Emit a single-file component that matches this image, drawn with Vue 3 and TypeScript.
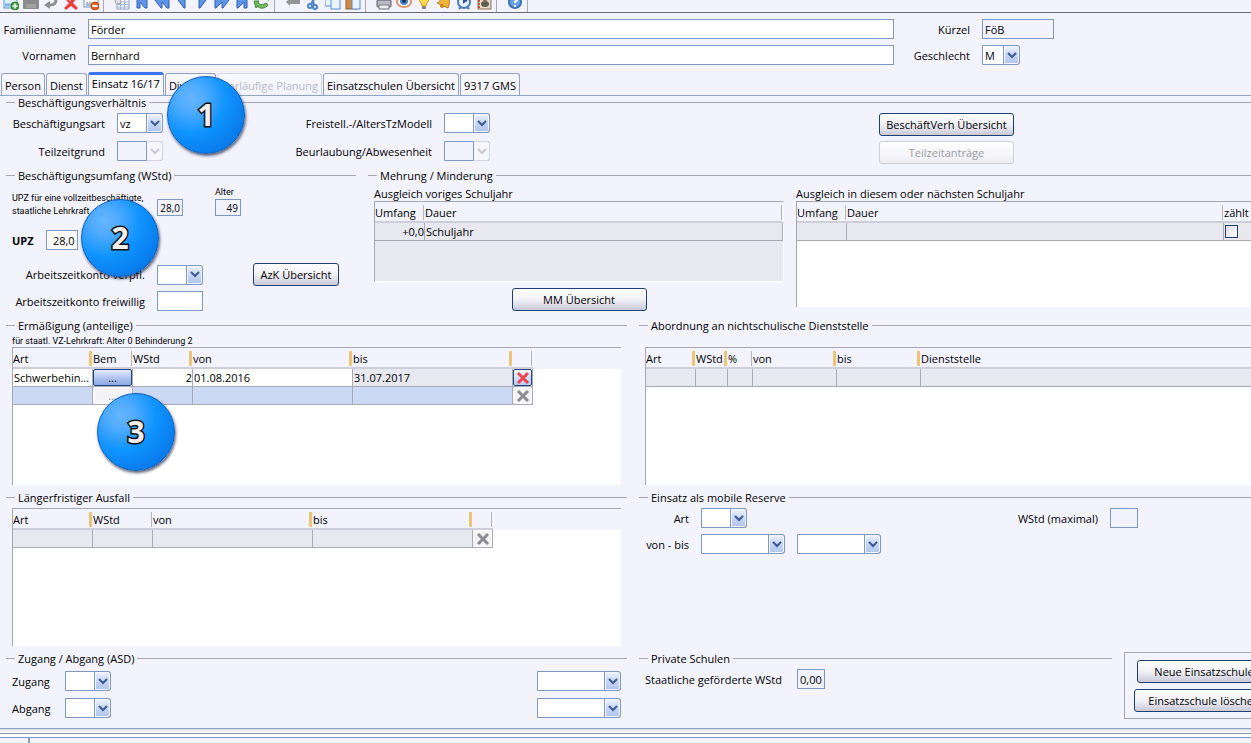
<script setup lang="ts">
import { ref } from 'vue'

type Mark = 'grip' | 'line' | 'none'
interface Column {
  label: string
  width?: number
  mark: Mark
}

const toolGroups: string[][] = [
  ['new', 'save', 'undo', 'delete', 'form'],
  ['grid', 'first', 'rewind', 'prev', 'next', 'forward', 'last', 'refresh'],
  ['back', 'cut', 'copy', 'paste'],
  ['print', 'view', 'hint', 'bell', 'clock', 'contacts'],
  ['help'],
]

const tabs = [
  { label: 'Person' },
  { label: 'Dienst' },
  { label: 'Einsatz 16/17' },
  { label: 'Diverses' },
  { label: 'Vorläufige Planung', disabled: true },
  { label: 'Einsatzschulen Übersicht' },
  { label: '9317 GMS' },
]
const activeTab = ref('Einsatz 16/17')

const familienname = ref('Förder')
const vornamen = ref('Bernhard')
const kuerzel = ref('FöB')
const upz = ref('28,0')
const azkFreiwillig = ref('')

const previousColumns: Column[] = [
  { label: 'Umfang', width: 50, mark: 'line' },
  { label: 'Dauer', mark: 'line' },
]
const currentColumns: Column[] = [
  { label: 'Umfang', width: 50, mark: 'line' },
  { label: 'Dauer', mark: 'line' },
  { label: 'zählt', width: 27, mark: 'none' },
]
const reductionColumns: Column[] = [
  { label: 'Art', width: 80, mark: 'grip' },
  { label: 'Bem', width: 40, mark: 'line' },
  { label: 'WStd', width: 60, mark: 'grip' },
  { label: 'von', width: 160, mark: 'grip' },
  { label: 'bis', width: 160, mark: 'grip' },
  { label: '', width: 20, mark: 'line' },
]
const secondmentColumns: Column[] = [
  { label: 'Art', width: 50, mark: 'grip' },
  { label: 'WStd', width: 32, mark: 'grip' },
  { label: '%', width: 25, mark: 'line' },
  { label: 'von', width: 84, mark: 'grip' },
  { label: 'bis', width: 84, mark: 'grip' },
  { label: 'Dienststelle', mark: 'none' },
]
const absenceColumns: Column[] = [
  { label: 'Art', width: 80, mark: 'grip' },
  { label: 'WStd', width: 60, mark: 'line' },
  { label: 'von', width: 160, mark: 'grip' },
  { label: 'bis', width: 160, mark: 'grip' },
  { label: '', width: 20, mark: 'line' },
]

const colWidth = (c: Column) => (c.width ? { width: c.width + 'px' } : {})
</script>

<template>
  <div class="page">
    <div class="toolbar" role="toolbar" aria-label="Werkzeuge">
      <div v-for="(group, g) in toolGroups" :key="g" class="tool-group">
        <button v-for="name in group" :key="name" type="button" class="tool" :aria-label="name">
          <svg viewBox="0 0 16 16" width="16" height="16" aria-hidden="true">
            <g v-if="name === 'new'">
              <rect x="1" y="1" width="13" height="13" fill="#d8ecfb" stroke="#5a93cf" />
              <path d="M2 11h11" stroke="#7db5e4" stroke-width="3" />
              <circle cx="12" cy="12" r="4" fill="#4fa546" stroke="#2f7a2c" />
              <path d="M12 9.500v5M9.500 12h5" stroke="#fff" stroke-width="1.500" />
            </g>
            <g v-else-if="name === 'save'">
              <rect x="0" y="0" width="16" height="15" rx="1" fill="#8c8c8c" />
              <rect x="3" y="10" width="10" height="4" fill="#a2a2a2" />
            </g>
            <g v-else-if="name === 'undo'">
              <path d="M9 2c5 0 6 9-2 9H5" fill="none" stroke="#8f8f8f" stroke-width="3" />
              <path d="M7 7v8L1 11z" fill="#8f8f8f" />
            </g>
            <path v-else-if="name === 'delete'" d="M2 2l5 5 5-5 2 2-4 5 5 5-2 2-5-4-5 4-2-2 5-5-5-5z" fill="#ee3e3e" />
            <g v-else-if="name === 'form'">
              <rect x="1" y="1" width="14" height="12" fill="#fff" stroke="#6b8fc2" />
              <path d="M3 9h2M6 9h2M3 11h5" stroke="#51719f" />
              <circle cx="12" cy="12" r="4" fill="#e9662b" stroke="#bd4413" />
              <path d="M9.500 12h5" stroke="#fff" stroke-width="2" />
            </g>
            <g v-else-if="name === 'grid'">
              <rect x="3" y="1" width="12" height="14" fill="#fff" stroke="#8aa4c8" />
              <path d="M3 8h12M3 10.500h12M3 13h12M6.500 6v9M10.500 6v9" stroke="#9db4d3" />
              <circle cx="4" cy="7" r="3" fill="#dfe2ea" stroke="#9a9faa" />
            </g>
            <path v-else-if="name === 'first'" d="M3 0h3v6l5-6h2v14h-2L6 8v6H3z" fill="#5f94e6" stroke="#2c5fb6" />
            <path v-else-if="name === 'rewind'" d="M1 6l6-6v6l6-6h2v14h-2L8 8v6H7z" fill="#5f94e6" stroke="#2c5fb6" />
            <path v-else-if="name === 'prev'" d="M4 6l7-7v15h-1z" fill="#5f94e6" stroke="#2c5fb6" />
            <path v-else-if="name === 'next'" d="M12 6L5-1v15h1z" fill="#5f94e6" stroke="#2c5fb6" />
            <path v-else-if="name === 'forward'" d="M15 6L9 0v6L3 0H1v14h1l6-6v6h1z" fill="#5f94e6" stroke="#2c5fb6" />
            <path v-else-if="name === 'last'" d="M13 0h-3v6L5 0H3v14h1l6-6v6h3z" fill="#5f94e6" stroke="#2c5fb6" />
            <g v-else-if="name === 'refresh'">
              <path d="M0 7h5l-1 2c2 2 5 2 8 0l2 2c-3 4-8 4-11 1l-1 2z" fill="#75bb62" stroke="#3d8b36" />
              <path d="M9 4l6 3V2z" fill="#75bb62" />
            </g>
            <path v-else-if="name === 'back'" d="M1 8l4-4v2h10v4H5v2z" fill="#949494" />
            <g v-else-if="name === 'cut'" fill="none" stroke="#4b87c9" stroke-width="2">
              <circle cx="5" cy="12" r="2" /><circle cx="10" cy="13" r="2" />
              <path d="M6 10l5-8M9 11L7 3" />
            </g>
            <g v-else-if="name === 'copy'">
              <rect x="0" y="0" width="10" height="12" fill="#eaf4ff" stroke="#5792d8" />
              <rect x="6" y="4" width="9" height="11" fill="#eaf4ff" stroke="#5792d8" />
            </g>
            <g v-else-if="name === 'paste'">
              <rect x="1" y="0" width="11" height="15" fill="#ce8b45" stroke="#96602d" />
              <rect x="7" y="3" width="8" height="12" fill="#eaf4ff" stroke="#5792d8" />
            </g>
            <g v-else-if="name === 'print'">
              <rect x="1" y="6" width="14" height="7" rx="1" fill="#b9bbc0" stroke="#54565c" />
              <rect x="3" y="11" width="10" height="4" fill="#eee" stroke="#77797f" />
            </g>
            <g v-else-if="name === 'view'">
              <ellipse cx="8" cy="8" rx="7" ry="5" fill="#fff" stroke="#dd946b" stroke-width="2" />
              <circle cx="8" cy="7" r="4" fill="#4a83d1" /><circle cx="8" cy="7" r="2" fill="#123666" />
            </g>
            <g v-else-if="name === 'hint'">
              <path d="M3 4c0-5 10-5 10 0 0 4-3 5-3 8H6c0-3-3-4-3-8z" fill="#ffd84d" stroke="#cf9a1a" />
              <rect x="6" y="12" width="4" height="3" fill="#8a8a8a" />
            </g>
            <g v-else-if="name === 'bell'">
              <path d="M1 9c5-2 4-8 8-8s6 5 3 13z" fill="#efb43a" stroke="#b37712" />
              <circle cx="6" cy="12" r="2" fill="#c98716" />
            </g>
            <g v-else-if="name === 'clock'">
              <circle cx="8" cy="8" r="6" fill="#e9f3fd" stroke="#4a7dbd" stroke-width="2" />
              <path d="M8 3v5l3-2" fill="none" stroke="#2c4f86" stroke-width="2" />
              <path d="M3 15l2-2M13 15l-2-2" stroke="#4a7dbd" stroke-width="2" />
            </g>
            <g v-else-if="name === 'contacts'">
              <rect x="2" y="0" width="13" height="15" fill="#e8dccb" stroke="#8f6f55" />
              <path d="M3 0v15" stroke="#c44f38" stroke-width="2" stroke-dasharray="2 1" />
              <ellipse cx="9" cy="10" rx="4" ry="3" fill="#5a5f50" />
              <circle cx="9" cy="6" r="2" fill="#8a6b52" />
            </g>
            <g v-else>
              <circle cx="8" cy="8" r="6" fill="#6ba2e2" stroke="#3b70b6" stroke-width="2" />
              <path d="M6 6c0-3 5-3 4 0-1 1-2 1-2 3M8 11v2" fill="none" stroke="#fff" stroke-width="2" />
            </g>
          </svg>
        </button>
      </div>
    </div>

    <div class="head">
      <label class="right" for="familienname">Familienname</label>
      <input id="familienname" v-model="familienname" class="box" type="text" />
      <label class="right" for="kuerzel">Kürzel</label>
      <input id="kuerzel" v-model="kuerzel" class="box locked" type="text" readonly />
      <span></span>
      <label class="right" for="vornamen">Vornamen</label>
      <input id="vornamen" v-model="vornamen" class="box" type="text" />
      <label class="right" for="geschlecht">Geschlecht</label>
      <span class="combo tiny">
        <select id="geschlecht"><option>M</option><option>W</option></select>
        <span class="arrow"><svg viewBox="0 0 10 7" width="10" height="7"><path d="M1 1l4 4 4-4" /></svg></span>
      </span>
    </div>

    <div class="tabs" role="tablist">
      <button
        v-for="tab in tabs"
        :key="tab.label"
        type="button"
        role="tab"
        class="tab"
        :class="{ active: tab.label === activeTab }"
        :aria-selected="tab.label === activeTab"
        :disabled="tab.disabled"
        @click="activeTab = tab.label"
      >{{ tab.label }}</button>
    </div>

    <main class="body">
      <fieldset class="employment">
        <legend>Beschäftigungsverhältnis</legend>
        <div class="employment-grid">
          <label class="right" for="art">Beschäftigungsart</label>
          <span class="combo">
            <select id="art"><option>vz</option><option>tz</option></select>
            <span class="arrow"><svg viewBox="0 0 10 7" width="10" height="7"><path d="M1 1l4 4 4-4" /></svg></span>
          </span>
          <label class="right" for="modell">Freistell.-/AltersTzModell</label>
          <span class="combo">
            <select id="modell"><option></option></select>
            <span class="arrow"><svg viewBox="0 0 10 7" width="10" height="7"><path d="M1 1l4 4 4-4" /></svg></span>
          </span>
          <span></span>
          <button type="button" class="btn">BeschäftVerh Übersicht</button>
          <span></span>
          <label class="right" for="grund">Teilzeitgrund</label>
          <span class="combo off">
            <select id="grund" disabled><option></option></select>
            <span class="arrow"><svg viewBox="0 0 10 7" width="10" height="7"><path d="M1 1l4 4 4-4" /></svg></span>
          </span>
          <label class="right" for="abwesenheit">Beurlaubung/Abwesenheit</label>
          <span class="combo off">
            <select id="abwesenheit" disabled><option></option></select>
            <span class="arrow"><svg viewBox="0 0 10 7" width="10" height="7"><path d="M1 1l4 4 4-4" /></svg></span>
          </span>
          <span></span>
          <button type="button" class="btn" disabled>Teilzeitanträge</button>
        </div>
      </fieldset>

      <div class="row scope-row">
        <fieldset>
          <legend>Beschäftigungsumfang (WStd)</legend>
          <div class="scope-top">
            <label class="small scope-note" for="upz-voll">UPZ für eine vollzeitbeschäftigte,<br />staatliche Lehrkraft</label>
            <input id="upz-voll" class="box locked mini" type="text" value="28,0" readonly />
            <div class="age">
              <label class="small" for="alter">Alter</label>
              <input id="alter" class="box locked mini" type="text" value="49" readonly />
            </div>
          </div>
          <div class="upz">
            <label for="upz">UPZ</label>
            <input id="upz" v-model="upz" class="box num" type="text" />
          </div>
          <div class="azk">
            <label class="right" for="azk-v">Arbeitszeitkonto verpfl.</label>
            <span class="combo">
              <select id="azk-v"><option></option></select>
              <span class="arrow"><svg viewBox="0 0 10 7" width="10" height="7"><path d="M1 1l4 4 4-4" /></svg></span>
            </span>
            <button type="button" class="btn azk-btn">AzK Übersicht</button>
          </div>
          <div class="azk second">
            <label class="right" for="azk-f">Arbeitszeitkonto freiwillig</label>
            <input id="azk-f" v-model="azkFreiwillig" class="box azk-input" type="text" />
          </div>
        </fieldset>

        <fieldset>
          <legend>Mehrung / Minderung</legend>
          <div class="balance">
            <div class="balance-col">
              <div class="caption">Ausgleich voriges Schuljahr</div>
              <div class="sheet short">
                <table>
                  <colgroup><col v-for="(c, i) in previousColumns" :key="i" :style="colWidth(c)" /></colgroup>
                  <thead><tr><th v-for="(c, i) in previousColumns" :key="i" scope="col"><div class="th">{{ c.label }}<i :class="c.mark"></i></div></th></tr></thead>
                  <tbody><tr class="gray"><td class="num">+0,0</td><td>Schuljahr</td></tr></tbody>
                </table>
              </div>
              <button type="button" class="btn mm">MM Übersicht</button>
            </div>
            <div class="balance-col">
              <div class="caption">Ausgleich in diesem oder nächsten Schuljahr</div>
              <div class="sheet medium">
                <table>
                  <colgroup><col v-for="(c, i) in currentColumns" :key="i" :style="colWidth(c)" /></colgroup>
                  <thead><tr><th v-for="(c, i) in currentColumns" :key="i" scope="col"><div class="th">{{ c.label }}<i :class="c.mark"></i></div></th></tr></thead>
                  <tbody><tr class="gray"><td></td><td></td><td class="open"><input type="checkbox" class="check" aria-label="zählt" /></td></tr></tbody>
                </table>
              </div>
            </div>
          </div>
        </fieldset>
      </div>

      <div class="row half reduction-row">
        <fieldset>
          <legend>Ermäßigung (anteilige)</legend>
          <div class="inset">
            <div class="small note">für staatl. VZ-Lehrkraft: Alter 0 Behinderung 2</div>
            <div class="sheet tall">
              <table class="fixed-cols">
                <colgroup><col v-for="(c, i) in reductionColumns" :key="i" :style="colWidth(c)" /></colgroup>
                <thead><tr><th v-for="(c, i) in reductionColumns" :key="i" scope="col"><div class="th">{{ c.label }}<i :class="c.mark"></i></div></th></tr></thead>
                <tbody>
                  <tr>
                    <td class="clip">Schwerbehin...</td>
                    <td class="flush"><button type="button" class="cell-btn on">...</button></td>
                    <td class="num">2</td>
                    <td>01.08.2016</td>
                    <td class="gray-cell">31.07.2017</td>
                    <td class="flush"><button type="button" class="cell-btn on light" aria-label="Zeile löschen"><svg class="cross red" viewBox="0 0 14 14" width="14" height="14"><path d="M2 2l10 10M12 2L2 12" /></svg></button></td>
                  </tr>
                  <tr class="selected">
                    <td></td>
                    <td class="flush"><button type="button" class="cell-btn idle" disabled>...</button></td>
                    <td></td>
                    <td></td>
                    <td></td>
                    <td class="flush"><button type="button" class="cell-btn idle" disabled aria-label="Zeile löschen"><svg class="cross" viewBox="0 0 14 14" width="14" height="14"><path d="M2 2l10 10M12 2L2 12" /></svg></button></td>
                  </tr>
                </tbody>
              </table>
            </div>
          </div>
        </fieldset>

        <fieldset>
          <legend>Abordnung an nichtschulische Dienststelle</legend>
          <div class="inset bleed lower">
            <div class="sheet tall">
              <table>
                <colgroup><col v-for="(c, i) in secondmentColumns" :key="i" :style="colWidth(c)" /></colgroup>
                <thead><tr><th v-for="(c, i) in secondmentColumns" :key="i" scope="col"><div class="th">{{ c.label }}<i :class="c.mark"></i></div></th></tr></thead>
                <tbody><tr class="gray"><td></td><td></td><td></td><td></td><td></td><td class="open"></td></tr></tbody>
              </table>
            </div>
          </div>
        </fieldset>
      </div>

      <div class="row half absence-row">
        <fieldset>
          <legend>Längerfristiger Ausfall</legend>
          <div class="inset upper">
            <div class="sheet tall">
              <table class="fixed-cols">
                <colgroup><col v-for="(c, i) in absenceColumns" :key="i" :style="colWidth(c)" /></colgroup>
                <thead><tr><th v-for="(c, i) in absenceColumns" :key="i" scope="col"><div class="th">{{ c.label }}<i :class="c.mark"></i></div></th></tr></thead>
                <tbody>
                  <tr class="gray">
                    <td></td><td></td><td></td><td></td>
                    <td class="flush"><button type="button" class="cell-btn idle" disabled aria-label="Zeile löschen"><svg class="cross" viewBox="0 0 14 14" width="14" height="14"><path d="M2 2l10 10M12 2L2 12" /></svg></button></td>
                  </tr>
                </tbody>
              </table>
            </div>
          </div>
        </fieldset>

        <fieldset>
          <legend>Einsatz als mobile Reserve</legend>
          <div class="reserve">
            <div class="reserve-line">
              <label class="right reserve-label" for="mr-art">Art</label>
              <span class="combo">
                <select id="mr-art"><option></option></select>
                <span class="arrow"><svg viewBox="0 0 10 7" width="10" height="7"><path d="M1 1l4 4 4-4" /></svg></span>
              </span>
              <label class="push" for="mr-max">WStd (maximal)</label>
              <input id="mr-max" class="box locked max" type="text" readonly />
            </div>
            <div class="reserve-line">
              <label class="right reserve-label" for="mr-von">von - bis</label>
              <span class="combo wide">
                <select id="mr-von"><option></option></select>
                <span class="arrow"><svg viewBox="0 0 10 7" width="10" height="7"><path d="M1 1l4 4 4-4" /></svg></span>
              </span>
              <span class="combo wide">
                <select aria-label="bis"><option></option></select>
                <span class="arrow"><svg viewBox="0 0 10 7" width="10" height="7"><path d="M1 1l4 4 4-4" /></svg></span>
              </span>
            </div>
          </div>
        </fieldset>
      </div>

      <div class="row half last-row">
        <fieldset>
          <legend>Zugang / Abgang (ASD)</legend>
          <div class="moves">
            <div v-for="move in ['Zugang', 'Abgang']" :key="move" class="move">
              <label class="move-label" :for="move">{{ move }}</label>
              <span class="combo">
                <select :id="move"><option></option></select>
                <span class="arrow"><svg viewBox="0 0 10 7" width="10" height="7"><path d="M1 1l4 4 4-4" /></svg></span>
              </span>
              <span class="combo wide end">
                <select :aria-label="move + ' Datum'"><option></option></select>
                <span class="arrow"><svg viewBox="0 0 10 7" width="10" height="7"><path d="M1 1l4 4 4-4" /></svg></span>
              </span>
            </div>
          </div>
        </fieldset>

        <div class="private">
          <fieldset>
            <legend>Private Schulen</legend>
            <div class="private-line">
              <label for="gefoerdert">Staatliche geförderte WStd</label>
              <input id="gefoerdert" class="box locked max" type="text" value="0,00" readonly />
            </div>
          </fieldset>
          <div class="actions">
            <button type="button" class="btn">Neue Einsatzschule</button>
            <button type="button" class="btn">Einsatzschule löschen</button>
          </div>
        </div>
      </div>

      <div class="badge one">1</div>
      <div class="badge two">2</div>
      <div class="badge three">3</div>
    </main>

    <footer class="dock"><div class="dock-gap"></div><div class="dock-bar"><span class="dock-cell"></span></div></footer>
  </div>
</template>

<style>
body {
  background: #f3f3fe;
}
</style>

<style scoped>
.page {
  height: 100vh;
  overflow: hidden;
  display: flex;
  flex-direction: column;
  background: #f3f3fe;
  color: #000;
  font-family: "Open Sans", "Noto Sans", sans-serif;
  font-size: 11px;
  line-height: 15px;
}
.page *,
.page *::before {
  box-sizing: border-box;
}
button,
input,
select {
  font: inherit;
  color: inherit;
  margin: 0;
}
label {
  white-space: nowrap;
}
.right {
  text-align: right;
}

/* Toolbar */
.toolbar {
  flex: none;
  display: flex;
  align-items: flex-end;
  height: 13px;
  padding-left: 1px;
  overflow: hidden;
  border-bottom: 1px solid #666875;
}
.tool-group {
  display: flex;
  padding-right: 2px;
  margin-right: 8px;
  border-right: 1px solid #a8a9b4;
}
.tool {
  width: 20px;
  height: 18px;
  padding: 0 2px 2px;
  border: 0;
  background: none;
}
.tool svg {
  display: block;
}

/* Fields */
.box {
  width: 100%;
  height: 20px;
  padding: 0 2px;
  border: 1px solid #7d99c2;
  border-radius: 0;
  background: #fff;
  outline: none;
}
.box.locked {
  background: #f2f3fe;
}
.box.num {
  text-align: right;
}
.box.mini {
  width: 26px;
  height: 17px;
  font-size: 10px;
  text-align: right;
  padding: 0 2px 0 0;
}
.box.max {
  width: 28px;
}
.combo {
  position: relative;
  display: block;
  flex: none;
  width: 46px;
  height: 20px;
}
.combo.tiny {
  width: 38px;
}
.combo.wide {
  width: 84px;
}
.combo select {
  appearance: none;
  display: block;
  width: 100%;
  height: 20px;
  padding: 0 17px 0 2px;
  border: 1px solid #7d99c2;
  border-radius: 0 3px 3px 0;
  background: #fff;
  opacity: 1;
}
.arrow {
  position: absolute;
  top: 0;
  right: 0;
  width: 17px;
  height: 20px;
  display: flex;
  align-items: center;
  justify-content: center;
  border: 1px solid #7d99c2;
  border-radius: 0 3px 3px 0;
  background: linear-gradient(#f0f5ff, #c9d8f5 45%, #b0c4ec);
  box-shadow: inset 0 0 0 1px #f4f7ff;
  pointer-events: none;
}
.arrow path {
  fill: none;
  stroke: #3d5a92;
  stroke-width: 2;
}
.combo.off select {
  background: #f2f3fe;
}
.combo.off .arrow {
  border-color: #d3d5de;
  border-left-color: #7d99c2;
  background: #f6f6fb;
}
.combo.off path {
  stroke: #c8cad3;
}
.btn {
  height: 23px;
  padding: 0 13px;
  border: 1px solid #1f3f73;
  border-radius: 3px;
  background: linear-gradient(#fff, #f1f1f8 50%, #c9c9d8);
  white-space: nowrap;
}
.btn:disabled {
  border-color: #cfcfd6;
  background: linear-gradient(#fff, #f5f5fa 60%, #ececf2);
  color: #9a9aa2;
}

/* Header */
.head {
  flex: none;
  display: grid;
  grid-template-columns: 76px 806fr 64px 72px 185fr;
  column-gap: 12px;
  row-gap: 6px;
  align-items: center;
  padding-top: 6px;
}

/* Tabs */
.tabs {
  flex: none;
  display: flex;
  align-items: flex-end;
  gap: 1px;
  height: 31px;
  padding-left: 1px;
  border-bottom: 1px solid #8fa3c6;
}
.tab {
  height: 22px;
  padding: 2px 3px 0;
  border: 1px solid #92a3c1;
  border-bottom: 0;
  border-radius: 3px 3px 0 0;
  background: linear-gradient(#f8f8ff, #f3f3fe);
  white-space: nowrap;
}
.tab.active {
  height: 23px;
  padding-top: 0;
  padding-bottom: 3px;
  border-top: 3px solid #3a74ee;
  background: #f8f8ff;
}
.tab:disabled {
  border-color: #d3d5e0;
  color: #b9bac4;
}

/* Sections */
.body {
  position: relative;
  flex: none;
  padding-left: 6px;
}
fieldset {
  min-width: 0;
  margin: 0;
  padding: 0;
  border: 0;
  border-top: 1px solid #a5a6b0;
}
legend {
  margin-left: 9px;
  padding: 0 3px;
  line-height: 13px;
}
.row {
  display: grid;
  column-gap: 12px;
}
.employment {
  min-height: 73px;
}
.employment-grid {
  display: grid;
  grid-template-columns: 93px 46px 257px 46px 365fr 135px 225fr;
  column-gap: 12px;
  grid-auto-rows: 28px;
  align-items: start;
  padding: 4px 0 0 6px;
}
.employment-grid label {
  line-height: 22px;
}
.employment-grid .btn {
  width: 135px;
  padding: 0;
}
.scope-row {
  grid-template-columns: 350fr 883fr;
  min-height: 150px;
}
.half {
  grid-template-columns: 621fr 612fr;
}
.small {
  font-family: Roboto, "Open Sans", sans-serif;
  font-size: 9px;
  line-height: 13px;
}
.scope-top {
  display: flex;
  align-items: flex-start;
  height: 36px;
  padding: 4px 0 0 6px;
}
.scope-note {
  width: 145px;
  padding-top: 6px;
}
.scope-top > .mini {
  margin-top: 13px;
}
.age {
  display: flex;
  flex-direction: column;
  margin-left: 32px;
}
.upz {
  display: flex;
  align-items: center;
  gap: 12px;
  padding: 12px 0 13px 6px;
  font-weight: 700;
}
.upz .box {
  width: 32px;
  font-weight: 400;
}
.azk {
  display: flex;
  align-items: center;
  gap: 12px;
  padding-left: 6px;
}
.azk label {
  width: 133px;
}
.azk-btn {
  width: 86px;
  padding: 0;
  margin-left: 38px;
}
.azk.second {
  padding-top: 5px;
}
.azk-input {
  width: 46px;
}
.balance {
  display: grid;
  grid-template-columns: 410fr 455fr;
  column-gap: 12px;
  padding: 5px 0 0 6px;
}
.balance-col {
  min-width: 0;
  display: flex;
  flex-direction: column;
}
.caption {
  line-height: 14px;
}
.mm {
  align-self: center;
  width: 135px;
  margin-top: 6px;
}

/* Tables */
.sheet {
  width: 100%;
  overflow: hidden;
  border-top: 1px solid #a5a6b0;
  border-left: 1px solid #a5a6b0;
  background: linear-gradient(#f3f3fe 21px, #fff 21px);
}
.sheet.short {
  height: 81px;
  background: linear-gradient(#f3f3fe 21px, #e8e8f1 21px);
  border-right: 1px solid #fff;
  border-bottom: 1px solid #fff;
}
.sheet.medium {
  height: 106px;
}
.sheet.tall {
  height: 138px;
}
table {
  width: 100%;
  table-layout: fixed;
  border-collapse: separate;
  border-spacing: 0;
}
table.fixed-cols {
  width: 0;
}
th {
  height: 21px;
  padding: 0;
  border-bottom: 2px solid #cdced9;
  font-weight: 400;
  text-align: left;
}
.th {
  display: flex;
  align-items: center;
  height: 19px;
  padding-top: 2px;
  white-space: nowrap;
}
.th i {
  flex: none;
  height: 15px;
  margin-left: auto;
}
.th .line {
  width: 2px;
  border-left: 1px solid #b4b5be;
}
.th .grip {
  width: 4px;
  border-left: 3px solid #ecc47a;
}
td {
  height: 18px;
  padding: 0 1px;
  border-right: 1px solid #a9aab3;
  border-bottom: 1px solid #a9aab3;
  line-height: 17px;
  white-space: nowrap;
}
td.open {
  border-right: 0;
}
td.num {
  padding: 0;
  text-align: right;
}
td.clip {
  overflow: hidden;
}
td.flush {
  padding: 0;
}
.gray td,
.gray-cell {
  background: #e8e8f1;
}
.selected td {
  background: #cbd9f5;
}
.check {
  appearance: none;
  display: block;
  width: 13px;
  height: 13px;
  border: 1px solid #1f3f73;
  background: linear-gradient(135deg, #dcdce4, #fff);
}
.cell-btn {
  display: flex;
  align-items: center;
  justify-content: center;
  width: 100%;
  height: 17px;
  padding: 0;
  border: 1px solid #1f4587;
  border-radius: 2px;
  background: linear-gradient(#e3ebfc, #a9bfec 60%, #8eaae2);
  line-height: 13px;
}
.cell-btn.light {
  background: linear-gradient(#f4f7ff, #b5c9f0);
}
.cell-btn.idle {
  border-color: #fff;
  background: #f3f3f8;
  color: #8e8e96;
}
.cross path {
  fill: none;
  stroke: #8c8c8f;
  stroke-width: 3;
}
.cross.red path {
  stroke: #ee4450;
}
.inset {
  padding: 0 6px;
}
.inset.bleed {
  padding-right: 0;
}
.inset.lower {
  padding-top: 15px;
}
.inset.upper {
  padding-top: 4px;
}
.note {
  padding-top: 4px;
  line-height: 11px;
}
.reduction-row {
  min-height: 172px;
}
.absence-row {
  min-height: 161px;
}
.last-row {
  min-height: 76px;
}

.reserve {
  display: flex;
  flex-direction: column;
  gap: 6px;
  padding: 4px 113px 0 6px;
}
.reserve-line {
  display: flex;
  align-items: center;
  gap: 12px;
}
.reserve-label {
  width: 44px;
}
.push {
  margin-left: auto;
}
.moves {
  display: flex;
  flex-direction: column;
  gap: 7px;
  padding: 6px 6px 0;
}
.move {
  display: flex;
  align-items: center;
  gap: 12px;
}
.move-label {
  width: 41px;
}
.end {
  margin-left: auto;
}
.private {
  display: grid;
  grid-template-columns: 1fr 127px;
  column-gap: 12px;
  align-items: start;
}
.private-line {
  display: flex;
  align-items: center;
  gap: 12px;
  padding: 4px 0 0 6px;
}
.private-line label {
  width: 140px;
}
.actions {
  display: flex;
  flex-direction: column;
  align-items: center;
  gap: 6px;
  width: 160px;
  padding: 7px 0 6px;
  border: 1px solid #a5a6b0;
}
.actions .btn {
  min-width: 135px;
}

/* Numbered markers */
.badge {
  position: absolute;
  width: 78px;
  height: 78px;
  border: 1px solid #0a5cb8;
  border-radius: 50%;
  background: radial-gradient(circle at 30% 28%, #66b5ff 0, #4fabff 18%, #0f94ff 46%, #0a80f0 70%, #0667d4 100%);
  box-shadow: 1px 2px 3px rgba(20, 30, 60, 0.7);
  color: #f7eeee;
  font-size: 30px;
  font-weight: 700;
  line-height: 76px;
  text-align: center;
  -webkit-text-stroke: 3px #111;
  paint-order: stroke fill;
}
.one {
  left: 167px;
  top: -20px;
}
.two {
  left: 81px;
  top: 103px;
}
.three {
  left: 97px;
  top: 297px;
}

/* Lower dock */
.dock {
  flex: 1 0 auto;
  display: flex;
  flex-direction: column;
}
.dock-gap {
  height: 6px;
  border-top: 1px solid #8a9fc2;
  border-bottom: 1px solid #8a93b4;
  background: linear-gradient(#d9d9e4, #fff);
}
.dock-bar {
  flex: 1;
  margin-top: 3px;
  border-top: 1px solid #7b97c8;
  box-shadow: 0 -3px 0 #fbfbff;
}
.dock-cell {
  display: block;
  width: 30px;
  height: 100%;
  min-height: 5px;
  border-right: 2px solid #8a9fc2;
}
</style>
